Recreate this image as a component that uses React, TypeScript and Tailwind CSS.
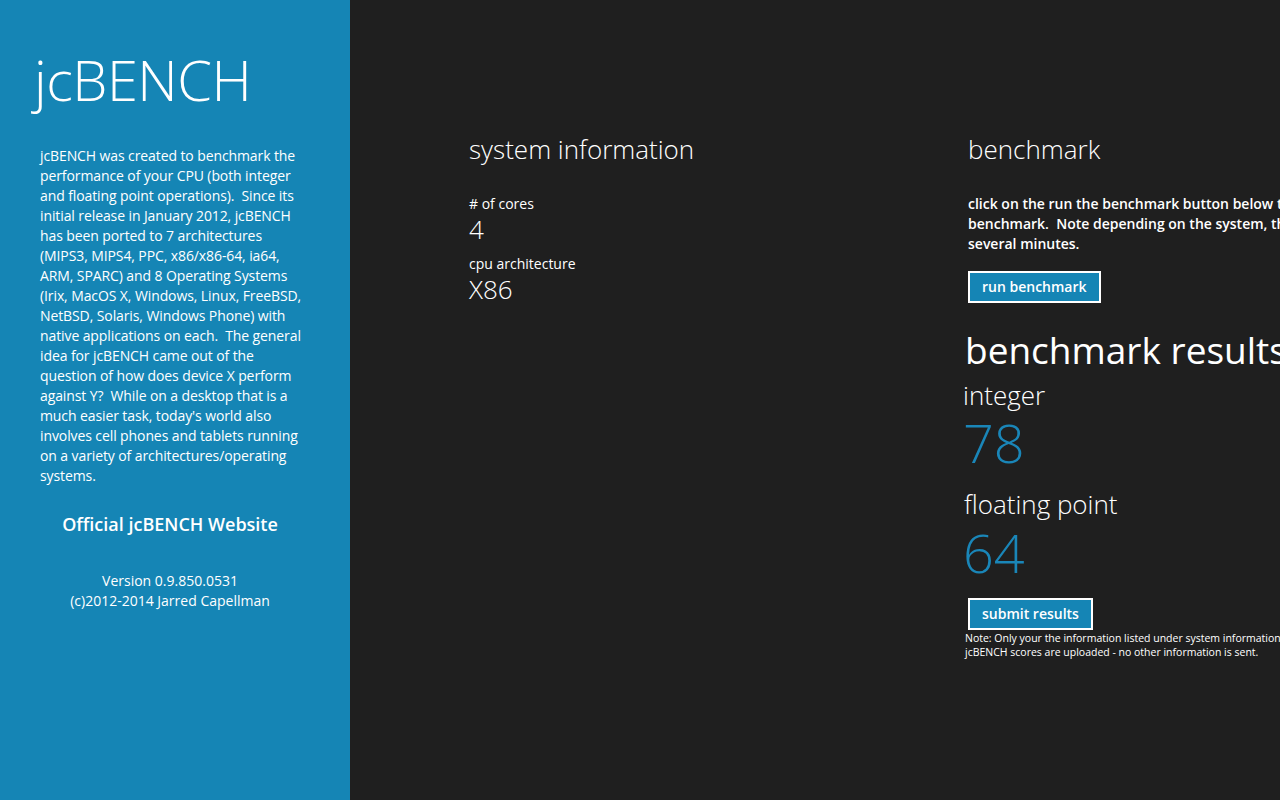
import React from 'react';

const font = { fontFamily: '"Open Sans", "Noto Sans", sans-serif' };

const aboutLines = [
  'jcBENCH was created to benchmark the',
  'performance of your CPU (both integer',
  'and floating point operations).\u00a0 Since its',
  'initial release in January 2012, jcBENCH',
  'has been ported to 7 architectures',
  '(MIPS3, MIPS4, PPC, x86/x86-64, ia64,',
  'ARM, SPARC) and 8 Operating Systems',
  '(Irix, MacOS X, Windows, Linux, FreeBSD,',
  'NetBSD, Solaris, Windows Phone) with',
  'native applications on each.\u00a0 The general',
  'idea for jcBENCH came out of the',
  'question of how does device X perform',
  'against Y?\u00a0 While on a desktop that is a',
  "much easier task, today's world also",
  'involves cell phones and tablets running',
  'on a variety of architectures/operating',
  'systems.',
];

function InfoItem({ label, value }: { label: string; value: string }) {
  return (
    <div className="flex flex-col">
      <div className="text-[14px] leading-[20px] text-white">{label}</div>
      <div className="text-[26px] leading-[30px] font-light text-white">{value}</div>
    </div>
  );
}

function TileButton({ children }: { children: React.ReactNode }) {
  return (
    <button className="self-start border-2 border-white bg-[#1585b5] px-[12px] h-[32px] text-[14px] font-semibold text-white leading-none">
      {children}
    </button>
  );
}

export default function App() {
  return (
    <div
      className="flex h-[800px] w-[1280px] overflow-hidden bg-[#1f1f1f] text-white"
      style={font}
    >
      {/* about panel */}
      <aside className="flex w-[350px] shrink-0 flex-col bg-[#1585b5] pl-[40px] pr-[40px]">
        <h1 className="mt-[44px] -ml-[6px] text-[56px] font-light leading-[70px] tracking-[-0.5px]">
          jcBENCH
        </h1>
        <p className="mt-[32px] whitespace-nowrap text-[14px] leading-[20px] tracking-[-0.1px]">
          {aboutLines.map((line, i) => (
            <span key={i} className="block">
              {line}
            </span>
          ))}
        </p>
        <div className="mt-[26px] -ml-[10px] text-center text-[18px] font-semibold leading-[24px]">
          Official jcBENCH Website
        </div>
        <div className="mt-[35px] -ml-[10px] text-center text-[14px] leading-[20px]">
          <div>Version 0.9.850.0531</div>
          <div>(c)2012-2014 Jarred Capellman</div>
        </div>
      </aside>

      {/* main content */}
      <main className="flex flex-1 pl-[119px] pt-[130px]">
        <section className="flex w-[499px] shrink-0 flex-col">
          <h2 className="text-[26px] font-light leading-[38px]">system information</h2>
          <div className="mt-[26px] flex flex-col gap-[10px]">
            <InfoItem label="# of cores" value="4" />
            <InfoItem label="cpu architecture" value="X86" />
          </div>
        </section>

        <section className="flex flex-col whitespace-nowrap">
          <h2 className="text-[26px] font-light leading-[38px]">benchmark</h2>
          <p className="mt-[26px] text-[14px] font-semibold leading-[20px]">
            click on the run the benchmark button below to start the
            <br />
            benchmark.&nbsp; Note depending on the system, this could take
            <br />
            several minutes.
          </p>
          <div className="mt-[17px] flex">
            <TileButton>run benchmark</TileButton>
          </div>
          <div className="-ml-[3px] mt-[22px] text-[37px] leading-[50px]">benchmark results</div>
          <div className="-ml-[5px] mt-[3px] text-[26px] font-light leading-[34px]">integer</div>
          <div className="-ml-[5px] text-[54px] font-light leading-[60px] text-[#1a86b8]">78</div>
          <div className="-ml-[4px] mt-[14px] text-[26px] font-light leading-[36px]">floating point</div>
          <div className="-ml-[5px] text-[54px] font-light leading-[60px] text-[#1a86b8]">64</div>
          <div className="mt-[16px] flex">
            <TileButton>submit results</TileButton>
          </div>
          <div className="-ml-[3px] mt-[1px] text-[10.5px] leading-[14px]">
            Note: Only your the information listed under system information and your
            <br />
            jcBENCH scores are uploaded - no other information is sent.
          </div>
        </section>
      </main>
    </div>
  );
}
